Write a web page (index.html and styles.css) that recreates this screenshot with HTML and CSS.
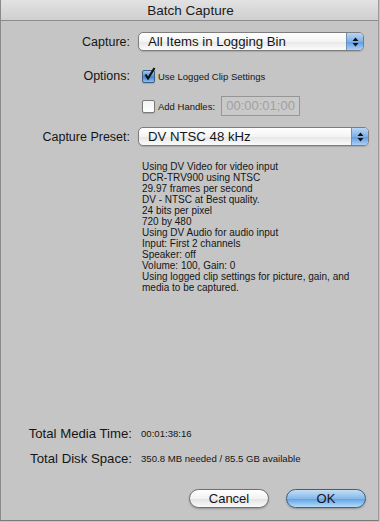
FILE: index.html
```html
<!DOCTYPE html>
<html>
<head>
<meta charset="utf-8">
<link rel="stylesheet" href="styles.css">
</head>
<body>
<div class="window">
  <div class="titlebar">Batch Capture</div>
  <div class="content">
    <div class="row row-capture">
      <div class="label">Capture:</div>
      <div class="popup popup-capture">
        <span class="popup-text">All Items in Logging Bin</span>
        <span class="popup-arrows"><svg width="7" height="10" viewBox="0 0 7 10"><path d="M3.5 0.5 L6.5 4 L0.5 4 Z M0.5 6 L6.5 6 L3.5 9.5 Z" fill="#111"/></svg></span>
      </div>
    </div>
    <div class="row row-options">
      <div class="label">Options:</div>
      <div class="check checked"><svg width="13" height="14" viewBox="0 0 13 14"><path d="M2.5 7.5 L5 11.5 L11.5 1" fill="none" stroke="#111" stroke-width="2.2"/></svg></div>
      <span class="small">Use Logged Clip Settings</span>
    </div>
    <div class="row row-handles">
      <div class="label"></div>
      <div class="check"></div>
      <span class="small">Add Handles:</span>
      <div class="timecode">00:00:01;00</div>
    </div>
    <div class="row row-preset">
      <div class="label">Capture Preset:</div>
      <div class="popup popup-preset">
        <span class="popup-text">DV NTSC 48 kHz</span>
        <span class="popup-arrows"><svg width="7" height="10" viewBox="0 0 7 10"><path d="M3.5 0.5 L6.5 4 L0.5 4 Z M0.5 6 L6.5 6 L3.5 9.5 Z" fill="#111"/></svg></span>
      </div>
    </div>
    <div class="desc">
      <div>Using DV Video for video input</div>
      <div>DCR-TRV900 using NTSC</div>
      <div>29.97 frames per second</div>
      <div>DV - NTSC at Best quality.</div>
      <div>24 bits per pixel</div>
      <div>720 by 480</div>
      <div>Using DV Audio for audio input</div>
      <div>Input: First 2 channels</div>
      <div>Speaker: off</div>
      <div>Volume: 100, Gain: 0</div>
      <div>Using logged clip settings for picture, gain, and</div>
      <div>media to be captured.</div>
    </div>
    <div class="row row-time">
      <div class="label label-total">Total Media Time:</div>
      <span class="value">00:01:38:16</span>
    </div>
    <div class="row row-disk">
      <div class="label label-total">Total Disk Space:</div>
      <span class="value">350.8 MB needed / 85.5 GB available</span>
    </div>
    <div class="buttons">
      <div class="btn btn-cancel">Cancel</div>
      <div class="btn btn-ok">OK</div>
    </div>
  </div>
</div>
</body>
</html>
```
FILE: styles.css
```css
html, body {
  margin: 0;
  padding: 0;
  background: #c4c4c4;
}
body {
  width: 380px;
  height: 522px;
  overflow: hidden;
  font-family: "Liberation Sans", Arial, sans-serif;
  color: #151515;
}
.window {
  width: 377px;
  height: 520px;
  background: #c5c5c5;
  border-left: 1px solid #8a8a8a;
  border-right: 1px solid #9a9a9a;
  border-bottom: 1px solid #7a7a7a;
  box-sizing: content-box;
}
.titlebar {
  height: 20px;
  line-height: 21px;
  text-align: center;
  font-size: 13.5px;
  color: #1a1a1a;
  background: linear-gradient(#e2e2e2, #cfcfcf);
  border-bottom: 1px solid #8c8c8c;
  padding-left: 2px;
}
.content {
  display: flex;
  flex-direction: column;
}
.row {
  display: flex;
  align-items: center;
}
.label {
  width: 129px;
  flex: none;
  text-align: right;
  font-size: 12.5px;
  margin-right: 8px;
}
.label-total {
  width: 131px;
  margin-right: 9px;
  font-size: 13.2px;
}
.row-capture {
  margin-top: 11px;
  height: 19px;
}
.popup {
  height: 17px;
  border: 1px solid #7d7d7d;
  border-radius: 5px;
  background: linear-gradient(#ffffff, #f4f4f4 50%, #e6e6e6 51%, #fbfbfb);
  display: flex;
  align-items: center;
  overflow: hidden;
  box-shadow: 0 1px 1px rgba(0,0,0,0.15);
}
.popup-capture {
  width: 224px;
}
.popup-preset {
  width: 229px;
}
.popup-text {
  flex: 1;
  font-size: 13.2px;
  padding-left: 9px;
}
.popup-arrows {
  width: 16px;
  height: 17px;
  display: flex;
  align-items: center;
  justify-content: center;
  background: linear-gradient(#b9d6f3, #7fb1e6 50%, #5d9ae0 51%, #a8d0f7);
  border-left: 1px solid #6f8fb5;
}
.row-options {
  margin-top: 17px;
  height: 16px;
}
.check {
  width: 11px;
  height: 11px;
  border: 1px solid #7a7a7a;
  border-radius: 2px;
  background: linear-gradient(#f4f4f4, #ffffff);
  margin-left: 4px;
  margin-right: 3px;
  flex: none;
  box-shadow: 0 1px 1px rgba(0,0,0,0.15);
  position: relative;
}
.check svg {
  position: absolute;
  left: 0px;
  top: -4px;
}
.checked {
  background: linear-gradient(#a6c8ec, #4d8fd8 50%, #3b82d4 51%, #8cc0f0);
  border-color: #3d5f86;
}
.small {
  font-size: 9.5px;
}
.row-handles {
  margin-top: 12px;
  height: 20px;
}
.timecode {
  margin-left: 6px;
  width: 77px;
  height: 18px;
  border: 1px solid #969696;
  background: #c9c9c9;
  color: #a0a0a0;
  font-size: 13px;
  line-height: 18px;
  text-align: center;
  box-sizing: content-box;
}
.row-preset {
  margin-top: 11px;
  height: 19px;
}
.desc {
  margin-top: 15px;
  margin-left: 141px;
  font-size: 10px;
  line-height: 11px;
}
.value {
  font-size: 9.6px;
}
.row-time {
  margin-top: 132px;
  height: 16px;
}
.row-disk {
  margin-top: 9px;
  height: 16px;
}
.buttons {
  margin-top: 23px;
  display: flex;
  justify-content: flex-end;
  gap: 17px;
  padding-right: 12px;
}
.btn {
  width: 78px;
  height: 17px;
  border-radius: 10px;
  font-size: 13px;
  line-height: 17px;
  text-align: center;
  border: 1px solid #6f6f6f;
  box-shadow: 0 1px 2px rgba(0,0,0,0.25);
}
.btn-cancel {
  background: linear-gradient(#ffffff, #f2f2f2 50%, #e2e2e2 51%, #fafafa);
}
.btn-ok {
  border-color: #3f5f88;
  background: linear-gradient(#c4def6, #86b9ea 50%, #5ea0e3 51%, #b5dcfb);
}
```
